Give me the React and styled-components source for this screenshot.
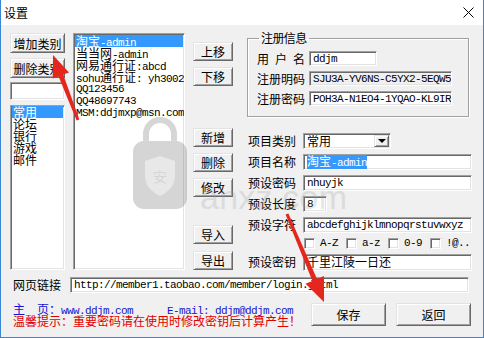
import React from 'react'
import styled, { createGlobalStyle, css } from 'styled-components'

const CJK_FONT = `"Noto Sans CJK SC", "Noto Sans", sans-serif`
const MONO_FONT = `"Liberation Mono", "Noto Sans CJK SC", monospace`

const GlobalStyle = createGlobalStyle`
  html, body {
    margin: 0;
    padding: 0;
    background: #fff;
  }
  * {
    box-sizing: border-box;
  }
`

const Cjk = styled.span`
  font-family: ${CJK_FONT};
  font-size: 12px;
  letter-spacing: 0;
`

// splits a string so the CJK runs get the 12px CJK font and the rest stays mono
const Mix = ({ text }) =>
    text.split(/([\u3000-\u303f\u4e00-\u9fff\uff00-\uffef]+)/).map((part, i) =>
        i % 2 ? <Cjk key={i}>{part}</Cjk> : part
    )

const sunken = css`
  background: #fff;
  border: 1px solid;
  border-color: #a0a0a0 #fff #fff #a0a0a0;
  box-shadow: inset 1px 1px 0 #696969, inset -1px -1px 0 #e3e3e3;
`

const raised = css`
  background: #f0f0f0;
  border: 1px solid;
  border-color: #e3e3e3 #696969 #696969 #e3e3e3;
  box-shadow: inset 1px 1px 0 #fff, inset -1px -1px 0 #a0a0a0;
`

const Window = styled.div`
  position: relative;
  width: 484px;
  height: 338px;
  display: flex;
  flex-direction: column;
  border: 1px solid #3a86d4;
  border-top: none;
  background: #f0f0f0;
  overflow: hidden;
`

const TitleBar = styled.div`
  flex: none;
  height: 25px;
  display: flex;
  align-items: center;
  justify-content: space-between;
  padding: 0 9px 0 3px;
  background: #fff;
  font: 12px ${CJK_FONT};
  color: #000;
`

const Body = styled.div`
  flex: 1;
  display: flex;
  flex-direction: column;
  padding: 8px 11px 0 9px;
  font-family: ${MONO_FONT};
  font-size: 11px;
  letter-spacing: -0.6px;
  color: #000;
`

const TopArea = styled.div`
  flex: none;
  height: 237px;
  display: flex;
`

const Column = styled.div`
  flex: none;
  display: flex;
  flex-direction: column;
  width: ${p => p.$w}px;
  margin-left: ${p => p.$ml || 0}px;
`

const Button = styled.button`
  flex: none;
  display: flex;
  align-items: center;
  justify-content: center;
  width: ${p => p.$w || 40}px;
  height: ${p => p.$h || 19}px;
  margin-top: ${p => p.$mt || 0}px;
  padding: 0;
  ${raised};
  font: 12px ${CJK_FONT};
  color: #000;
`

const TextBox = styled.div`
  flex: none;
  height: ${p => p.$h || 16}px;
  width: ${p => (p.$w ? `${p.$w}px` : 'auto')};
  margin-top: ${p => p.$mt || 0}px;
  display: flex;
  align-items: center;
  padding: 0 3px;
  ${sunken};
  background: ${p => (p.$readonly ? '#f0f0f0' : '#fff')};
  white-space: nowrap;
  overflow: hidden;
  line-height: 12px;
`

const ListBox = styled.div`
  flex: 1;
  margin-top: ${p => p.$mt || 0}px;
  padding: ${p => p.$pt || 0}px 1px 0;
  ${sunken};
  overflow: hidden;
`

const ListItem = styled.div`
  height: 12px;
  line-height: 12px;
  padding-left: 1px;
  white-space: nowrap;
  background: ${p => (p.$selected ? '#3399ff' : 'transparent')};
  color: ${p => (p.$selected ? '#fff' : '#000')};
`

const Group = styled.fieldset`
  flex: none;
  width: 222px;
  height: 86px;
  margin: -2px 0 0;
  padding: 6px 0 0 9px;
  border: 1px solid #a0a0a0;
  box-shadow: 1px 1px 0 #fff, inset 1px 1px 0 #fff;
`

const Legend = styled.legend`
  margin-left: 2px;
  padding: 0 2px;
  font: 12px/14px ${CJK_FONT};
`

const GroupRow = styled.div`
  display: flex;
  align-items: center;
  height: 15px;
  margin-top: ${p => p.$mt || 0}px;
`

const Label = styled.span`
  flex: none;
  width: ${p => p.$w}px;
  padding-left: ${p => p.$pl || 0}px;
  font: 12px/14px ${CJK_FONT};
  letter-spacing: ${p => (p.$spaced ? '6px' : '0')};
  white-space: nowrap;
`

const FormRow = styled.div`
  flex: none;
  display: flex;
  align-items: center;
  height: 16px;
  margin-top: ${p => p.$mt || 5}px;
  padding-left: 1px;
`

const Combo = styled(TextBox)`
  padding-right: 1px;
`

const DropButton = styled.span`
  margin-left: auto;
  width: 15px;
  height: 12px;
  display: flex;
  align-items: center;
  justify-content: center;
  ${raised};

  &::after {
    content: '';
    border-left: 4px solid transparent;
    border-right: 4px solid transparent;
    border-top: 4px solid #000;
  }
`

const Selection = styled.span`
  background: #3399ff;
  color: #fff;
`

const CheckRow = styled.div`
  flex: none;
  display: flex;
  align-items: center;
  gap: 8px;
  height: 12px;
  margin-top: 4px;
  padding-left: 57px;
`

const CheckItem = styled.span`
  display: inline-flex;
  align-items: center;
  gap: 5px;
  white-space: nowrap;
`

const CheckBox = styled.span`
  width: 11px;
  height: 11px;
  ${sunken};
`

const LinkRow = styled.div`
  flex: none;
  display: flex;
  align-items: center;
  height: 16px;
  margin-top: 7px;
`

const Footer = styled.div`
  flex: none;
  display: flex;
  justify-content: space-between;
  margin-top: 10px;
  padding-right: 1px;
`

const Notes = styled.div`
  padding-left: 3px;
`

const NoteLine = styled.div`
  height: 12px;
  line-height: 12px;
  white-space: nowrap;
  color: ${p => p.$color};
`

const Spacer = styled.span`
  display: inline-block;
  width: ${p => p.$w}px;
`

const Actions = styled.div`
  display: flex;
  gap: 10px;
`

const Overlay = styled.svg`
  position: absolute;
  top: 0;
  left: -1px;
  pointer-events: none;
`

const items = [
    '淘宝-admin',
    '当当网-admin',
    '网易通行证:abcd',
    'sohu通行证: yh3002',
    'QQ123456',
    'QQ48697743',
    'MSM:ddjmxp@msn.com',
]

const categories = ['常用', '论坛', '银行', '游戏', '邮件']

const checks = ['A-Z', 'a-z', '0-9', '!@..']

const CloseIcon = () => (
    <svg width="11" height="11" viewBox="0 0 11 11">
        <path d="M0.5 0.5 L10.5 10.5 M10.5 0.5 L0.5 10.5" stroke="#000" strokeWidth="1" />
    </svg>
)

const App = () => {
    return (
        <>
            <GlobalStyle />
            <Window>
                <TitleBar>
                    <span>设置</span>
                    <CloseIcon />
                </TitleBar>
                <Body>
                    <TopArea>
                        <Column $w={55}>
                            <Button $w={55} $h={20}>增加类别</Button>
                            <Button $w={55} $h={20} $mt={5}>删除类别</Button>
                            <TextBox $h={18} $mt={4} />
                            <ListBox $mt={5}>
                                {categories.map((c, i) => (
                                    <ListItem key={c} $selected={i === 0}><Mix text={c} /></ListItem>
                                ))}
                            </ListBox>
                        </Column>

                        <Column $w={112} $ml={8}>
                            <ListBox $pt={1}>
                                {items.map((t, i) => (
                                    <ListItem key={t} $selected={i === 0}><Mix text={t} /></ListItem>
                                ))}
                            </ListBox>
                        </Column>

                        <Column $w={40} $ml={8}>
                            <Button $mt={9}>上移</Button>
                            <Button $mt={6}>下移</Button>
                            <Button $mt={42}>新增</Button>
                            <Button $mt={6}>删除</Button>
                            <Button $mt={6}>修改</Button>
                            <Button $mt={28}>导入</Button>
                            <Button $mt={7}>导出</Button>
                        </Column>

                        <Column $w={225} $ml={14}>
                            <Group>
                                <Legend>注册信息</Legend>
                                <GroupRow>
                                    <Label $w={52} $spaced>用户名</Label>
                                    <TextBox $w={68} $h={15}>ddjm</TextBox>
                                </GroupRow>
                                <GroupRow $mt={5}>
                                    <Label $w={52}>注册明码</Label>
                                    <TextBox $w={143} $h={15} $readonly>SJU3A-YV6NS-C5YX2-5EQW5</TextBox>
                                </GroupRow>
                                <GroupRow $mt={5}>
                                    <Label $w={52}>注册密码</Label>
                                    <TextBox $w={143} $h={15}>POH3A-N1EO4-1YQAO-KL9IR</TextBox>
                                </GroupRow>
                            </Group>

                            <FormRow $mt={16}>
                                <Label $w={55}>项目类别</Label>
                                <Combo $w={88}>
                                    <Mix text="常用" />
                                    <DropButton />
                                </Combo>
                            </FormRow>
                            <FormRow>
                                <Label $w={55}>项目名称</Label>
                                <TextBox $w={169}>
                                    <Selection><Mix text="淘宝-admin" /></Selection>
                                </TextBox>
                            </FormRow>
                            <FormRow>
                                <Label $w={55}>预设密码</Label>
                                <TextBox $w={169}>nhuyjk</TextBox>
                            </FormRow>
                            <FormRow>
                                <Label $w={55}>预设长度</Label>
                                <TextBox $w={24}>8</TextBox>
                            </FormRow>
                            <FormRow>
                                <Label $w={55}>预设字符</Label>
                                <TextBox $w={169}>abcdefghijklmnopqrstuvwxyz</TextBox>
                            </FormRow>
                            <CheckRow>
                                {checks.map(c => (
                                    <CheckItem key={c}>
                                        <CheckBox />
                                        {c}
                                    </CheckItem>
                                ))}
                            </CheckRow>
                            <FormRow $mt={5}>
                                <Label $w={55}>预设密钥</Label>
                                <TextBox $w={169} $h={17}><Mix text="千里江陵一日还" /></TextBox>
                            </FormRow>
                        </Column>
                    </TopArea>

                    <LinkRow>
                        <Label $w={60} $pl={3}>网页链接</Label>
                        <TextBox $w={399}>http://member1.taobao.com/member/login.jhtml</TextBox>
                    </LinkRow>

                    <Footer>
                        <Notes>
                            <NoteLine $color="#1515d0">
                                <Mix text="主　页：www.ddjm.com" />
                                <Spacer $w={34} />
                                E-mail: ddjm@ddjm.com
                            </NoteLine>
                            <NoteLine $color="#e00000">
                                <Mix text="温馨提示：重要密码请在使用时修改密钥后计算产生！" />
                            </NoteLine>
                        </Notes>
                        <Actions>
                            <Button $w={75} $h={23}>保存</Button>
                            <Button $w={75} $h={23}>返回</Button>
                        </Actions>
                    </Footer>
                </Body>

                <Overlay width="484" height="338" viewBox="0 0 484 338">
                    <g opacity="0.28">
                        <path d="M146 146 V134 a14 14 0 0 1 28 0 V146" fill="none" stroke="#707070" strokeWidth="6" />
                        <rect x="133" y="141" width="54" height="68" rx="11" fill="#6a6a6a" />
                        <path d="M160 156 L175 161 V176 C175 186 168 192 160 196 C152 192 145 186 145 176 V161 Z" fill="#b0b0b0" />
                        <text x="160" y="182" textAnchor="middle" fontSize="14" fill="#6a6a6a" fontFamily='"Noto Sans CJK SC", sans-serif'>安</text>
                    </g>
                    <text x="200" y="209" fontSize="34" textLength="147" fill="#a0a0a0" opacity="0.25" fontFamily='"Liberation Sans", sans-serif'>anxz.com</text>
                    <polygon
                        points="79.4,119.5 63.2,74.6 69,72.4 53,55 52.8,78.6 58.6,76.4 76.6,120.5"
                        fill="#e5261f"
                    />
                    <polygon
                        points="288.4,213.4 317,278.9 324,276 324,302 305.5,283.8 312.4,280.9 285.6,214.6"
                        fill="#e5261f"
                    />
                </Overlay>
            </Window>
        </>
    )
}

export default App
